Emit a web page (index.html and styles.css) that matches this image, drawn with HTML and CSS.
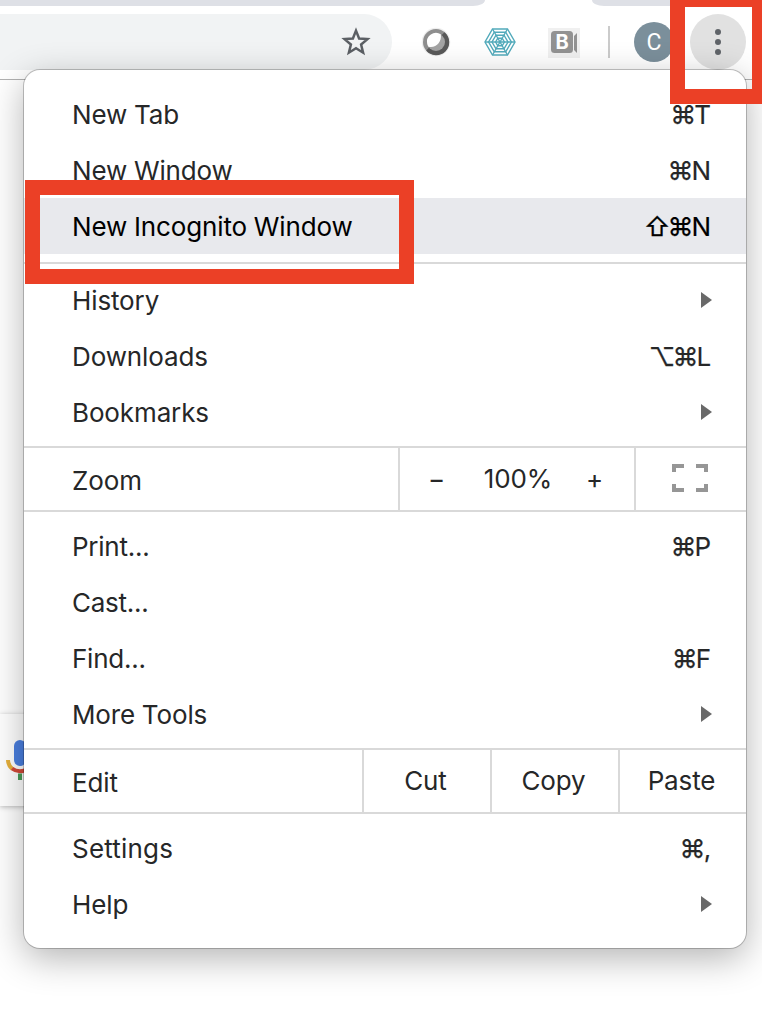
FILE: index.html
```html
<!DOCTYPE html>
<html lang="en">
<head>
<meta charset="utf-8">
<title>Browser menu</title>
<link rel="stylesheet" href="styles.css">
</head>
<body>
<div class="window">
  <div class="tabstrip"><div class="tab-left"></div><div class="tab-right"></div></div>
  <div class="toolbar">
    <div class="omnibox">
      <svg class="star" width="30" height="30" viewBox="0 0 30 30"><path d="M15 3.600l3.100 7.900 8.400.6-6.400 5.400 2 8.200-7.100-4.400-7.100 4.400 2-8.200-6.400-5.400 8.400-.6z" fill="none" stroke="#5b5f64" stroke-width="2.500"/></svg>
    </div>
    <svg class="ext ext-orb" width="30" height="32" viewBox="0 0 30 32">
      <circle cx="15" cy="16" r="14.300" fill="#eeeeee"/>
      <circle cx="15" cy="16" r="13" fill="#8e8e8e"/>
      <path d="M23.500 6.200A13 13 0 1 1 5.200 24.500z" fill="#595959"/>
      <circle cx="15" cy="16" r="9" fill="#a3a3a3"/>
      <path d="M6.200 17.800A9 9 0 0 1 19.800 8.300C21 16 15 22.500 7.400 20.800A9 9 0 0 1 6.200 17.800z" fill="#fff"/>
    </svg>
    <svg class="ext ext-web" width="32" height="30" viewBox="0 0 32 30" fill="none" stroke="#52aabb" stroke-width="1.400">
      <path d="M8.500 2h15L31 15l-7.500 13h-15L1 15z"/>
      <path d="M10.300 5.200h11.400L27.400 15l-5.700 9.800H10.300L4.600 15z"/>
      <path d="M12 8.200h8L24 15l-4 6.800h-8L8 15z"/>
      <path d="M13.800 11.200h4.400L20.400 15l-2.200 3.800h-4.400L11.600 15z"/>
      <path d="M8.500 2l15 26M23.500 2l-15 26M1 15h30"/>
    </svg>
    <svg class="ext ext-cam" width="32" height="32" viewBox="0 0 32 32">
      <path fill="#ececec" fill-opacity=".8" d="M0 2h32v30H0z"/>
      <rect x="3" y="5" width="22" height="22" rx="3.500" fill="#929292"/>
      <path d="M26 10l3-3v20l-3-3z" fill="#929292"/>
      <text x="14" y="23" class="cam-letter">B</text>
    </svg>
    <div class="divider"></div>
    <div class="avatar">C</div>
    <div class="more"><i></i><i></i><i></i></div>
  </div>
  <div class="searchbox">
    <svg width="24" height="44" viewBox="0 0 24 44">
      <rect x="14" y="2" width="12" height="26" rx="6" fill="#4a7fe0"/>
      <path d="M8 22a12 12 0 0 0 4.200 8.800" fill="none" stroke="#e6b03c" stroke-width="4"/>
      <path d="M12 30.500A13 13 0 0 0 28 30.500" fill="none" stroke="#d44a38" stroke-width="4"/>
      <path d="M18 35.500h4V42h-4z" fill="#4b9d59"/>
    </svg>
  </div>

  <div class="menu">
    <div class="item"><span>New Tab</span><kbd><span class="mod">⌘</span>T</kbd></div>
    <div class="item"><span>New Window</span><kbd><span class="mod">⌘</span>N</kbd></div>
    <div class="item active"><span>New Incognito Window</span><kbd><span class="mod">⇧⌘</span>N</kbd></div>
    <div class="separator"></div>
    <div class="item"><span>History</span><b class="arrow"></b></div>
    <div class="item"><span>Downloads</span><kbd><span class="mod">⌥⌘</span>L</kbd></div>
    <div class="item"><span>Bookmarks</span><b class="arrow"></b></div>
    <div class="strip">
      <span class="strip-label">Zoom</span>
      <div class="zoom-cell"><span>−</span><span class="percent">100%</span><span class="plus">+</span></div>
      <div class="full-cell">
        <svg width="36" height="28" viewBox="0 0 36 28" fill="none" stroke="#969696" stroke-width="4"><path d="M12 2H2v6M24 2h10v6M12 26H2v-6M24 26h10v-6"/></svg>
      </div>
    </div>
    <div class="item"><span class="tight">Print...</span><kbd><span class="mod">⌘</span>P</kbd></div>
    <div class="item"><span class="tight">Cast...</span></div>
    <div class="item"><span class="tight">Find...</span><kbd><span class="mod">⌘</span>F</kbd></div>
    <div class="item"><span>More Tools</span><b class="arrow"></b></div>
    <div class="strip">
      <span class="strip-label">Edit</span>
      <div class="edit-cell">Cut</div>
      <div class="edit-cell">Copy</div>
      <div class="edit-cell">Paste</div>
    </div>
    <div class="item"><span class="wide">Settings</span><kbd><span class="mod">⌘</span>,</kbd></div>
    <div class="item"><span>Help</span><b class="arrow"></b></div>
  </div>

  <div class="highlight highlight-more"></div>
  <div class="highlight highlight-incognito"></div>
</div>
</body>
</html>
```
FILE: styles.css
```css
* { box-sizing: border-box; }
body { margin: 0; background: #fff; font-family: Inter, "DejaVu Sans", sans-serif; }
.window { position: relative; width: 762px; height: 1014px; overflow: hidden; background: #fff; }
.tabstrip { display: flex; justify-content: space-between; height: 6px; }
.tab-left { width: 485px; background: #dee0e6; border-bottom-right-radius: 12px 6px; }
.tab-right { width: 170px; background: #dee0e6; border-bottom-left-radius: 12px 6px; }
.toolbar { display: flex; align-items: center; height: 74px; padding: 8px 0 10px; border-bottom: 1px solid #b1b1b1; }
.omnibox { display: flex; align-items: center; justify-content: flex-end; width: 392px; height: 56px; padding-right: 21px; background: #f1f3f4; border-radius: 0 28px 28px 0; }
.ext { flex: none; }
.ext-orb { margin-left: 29px; }
.ext-web { margin-left: 33px; }
.ext-cam { margin-left: 32px; }
.cam-letter { font: bold 20px Inter, sans-serif; fill: #fff; text-anchor: middle; }
.divider { width: 2px; height: 32px; margin-left: 28px; background: #cbcbcb; }
.avatar { display: flex; flex: none; align-items: center; justify-content: center; width: 40px; height: 40px; margin-left: 24px; padding-top: 2px; border-radius: 50%; background: #7b8f9b; color: #fff; font: 23px Roboto, sans-serif; }
.more { display: flex; flex: none; flex-direction: column; align-items: center; justify-content: center; gap: 4px; width: 56px; height: 56px; margin-left: 16px; border-radius: 50%; background: #e1e1e1; }
.more i { width: 6px; height: 6px; border-radius: 50%; background: #5f6368; }
.searchbox { width: 90px; height: 92px; margin-top: 634px; padding-top: 24px; background: #fff; box-shadow: 0 1px 5px rgba(0, 0, 0, .28); }
.searchbox svg { display: block; }

.menu { position: absolute; left: 24px; top: 70px; width: 722px; height: 878px; padding-top: 16px; overflow: hidden; background: #fff; border-radius: 16px; box-shadow: 0 0 0 1px rgba(0, 0, 0, .22), 0 10px 36px rgba(0, 0, 0, .3); color: #262728; font-size: 26px; letter-spacing: -.12px; word-spacing: -.5px; }
.item { display: flex; align-items: center; justify-content: space-between; height: 56px; padding: 0 36px 0 48px; white-space: nowrap; }
.item.active { background: #e8e9ed; color: #000; }
.wide { letter-spacing: .2px; }
.tight { letter-spacing: -.25px; }
kbd { margin-right: -1px; font: inherit; -webkit-text-stroke: .15px currentColor; }
.mod { letter-spacing: -3px; margin-right: 1px; -webkit-text-stroke: .25px currentColor; }
.separator { height: 2px; margin: 8px 0; background: #d9d9d9; }
.arrow { width: 0; height: 0; margin-right: -2px; border: solid transparent; border-width: 8px 0 8px 11px; border-left-color: #696969; }
.strip { display: flex; height: 66px; margin: 6px 0; border: solid #d9d9d9; border-width: 2px 0; }
.strip-label { flex: 1; padding: 2px 0 0 48px; line-height: 62px; }
.zoom-cell { display: grid; grid-template-columns: 73px 90px 1fr; width: 236px; border-left: 2px solid #d9d9d9; line-height: 62px; text-align: center; }
.plus { padding-right: 8px; }
.full-cell { display: flex; align-items: center; justify-content: center; width: 112px; padding: 0 2px 2px 0; border-left: 2px solid #d9d9d9; }
.edit-cell { width: 128px; padding-right: 3px; border-left: 2px solid #d9d9d9; line-height: 62px; text-align: center; }
.highlight { position: absolute; border: 15px solid #eb4026; }
.highlight-more { left: 670px; top: -8px; width: 97px; height: 112px; }
.highlight-incognito { left: 25px; top: 180px; width: 389px; height: 104px; }
```
